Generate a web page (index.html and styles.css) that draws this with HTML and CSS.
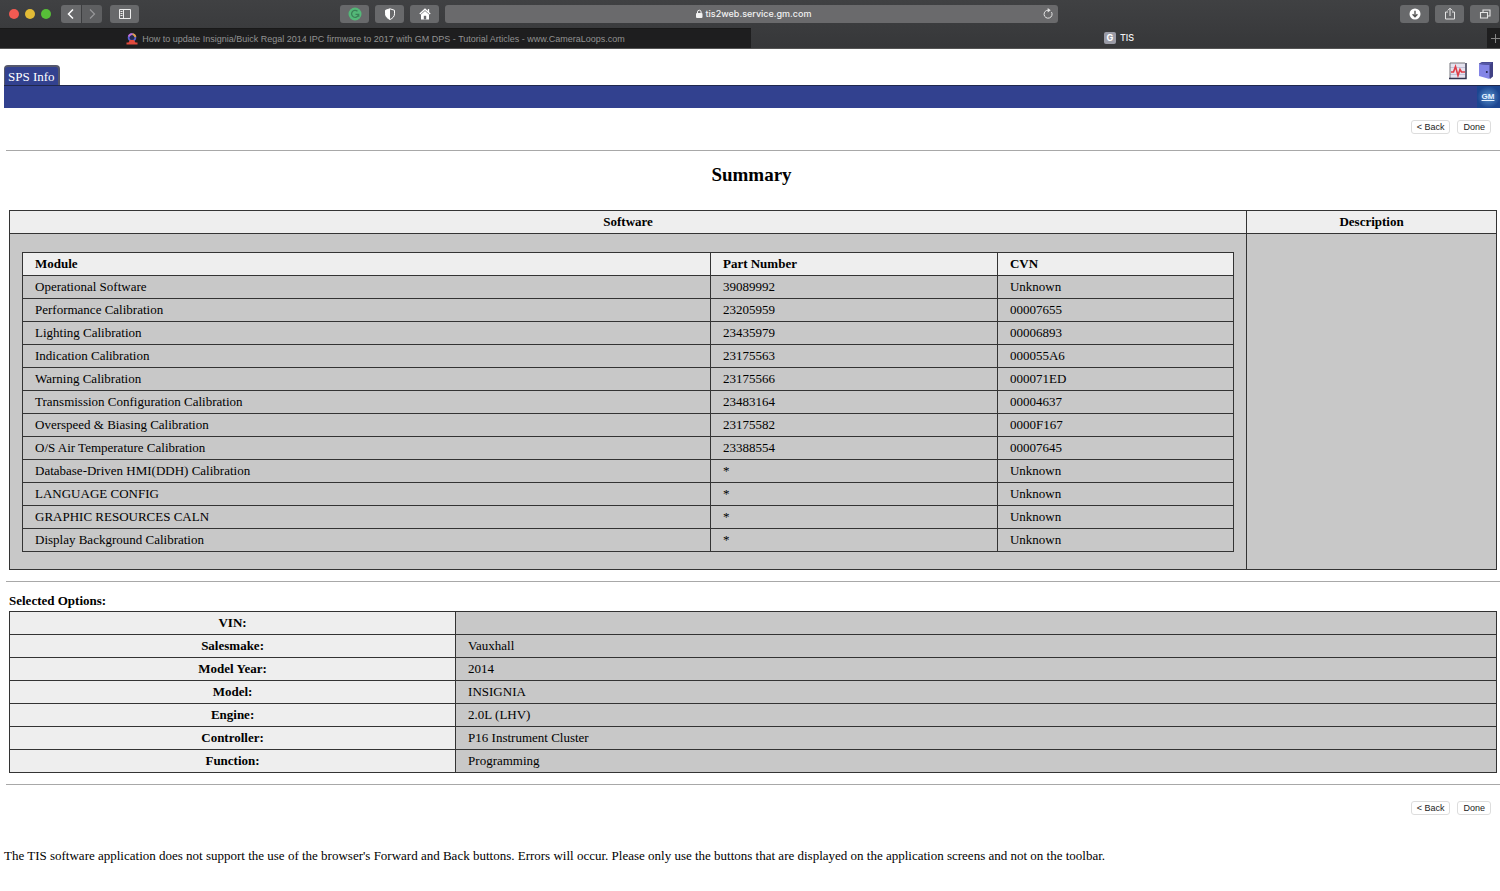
FILE: index.html
```html
<!DOCTYPE html>
<html lang="en">
<head>
<meta charset="utf-8">
<title>TIS</title>
<link rel="stylesheet" href="styles.css">
</head>
<body>
<header class="browser">
  <div class="toolbar">
    <div class="tools">
      <div class="lights"><span class="light red"></span><span class="light yellow"></span><span class="light green"></span></div>
      <div class="history">
        <button class="tool prev" aria-label="Back"><svg width="18" height="18" viewBox="0 0 18 18"><path d="M11 4.500L6.500 9l4.500 4.500" fill="none" stroke="#fff" stroke-width="1.500"/></svg></button>
        <button class="tool next" aria-label="Forward" disabled><svg width="18" height="18" viewBox="0 0 18 18"><path d="M7 4.500L11.500 9 7 13.500" fill="none" stroke="#98989a" stroke-width="1.200"/></svg></button>
      </div>
      <button class="tool" aria-label="Sidebar"><svg width="18" height="18" viewBox="0 0 18 18"><path d="M3.500 4.500h11v9h-11zM7.500 4.500v9M4.500 6.500h2M4.500 8.500h2M4.500 10.500h2" fill="none" stroke="#ececec"/></svg></button>
    </div>
    <div class="location">
      <button class="tool" aria-label="Grammarly"><svg width="18" height="18" viewBox="0 0 18 18"><circle cx="9" cy="9" r="6.500" fill="#54b878"/><path d="M11.500 6.300A3.500 3.500 0 1 0 12.400 10M9.500 9.300h3.200v2.400" fill="none" stroke="#3a8157" stroke-width="1.300"/></svg></button>
      <button class="tool" aria-label="Privacy report"><svg width="18" height="18" viewBox="0 0 18 18"><path d="M9 3.800l4.500 1.500v3.500c0 2.700-1.800 4.500-4.500 5.700-2.700-1.200-4.500-3-4.500-5.700V5.300z" fill="none" stroke="#fff"/><path d="M9 3.800v10.700c-2.700-1.200-4.500-3-4.500-5.700V5.300z" fill="#fff"/></svg></button>
      <button class="tool" aria-label="Home"><svg width="18" height="18" viewBox="0 0 18 18"><path d="M3.800 9L9 4.200 14.200 9M12.500 4v3.500" fill="none" stroke="#fff" stroke-width="1.300"/><path d="M5 9.500V14.500h8V9.500L9 6z" fill="#fff"/><path d="M7.800 14.500v-3.700h2.400v3.700" fill="#68696b"/></svg></button>
      <div class="address">
        <span class="host"><svg width="8" height="10" viewBox="0 0 8 10"><rect x="1" y="4" width="6.500" height="5" rx="1" fill="#f2f2f2"/><path d="M2.500 4.500V3a1.800 1.800 0 0 1 3.600 0v1.500" fill="none" stroke="#f2f2f2"/></svg>tis2web.service.gm.com</span>
        <button class="reload" aria-label="Reload"><svg width="14" height="14" viewBox="0 0 14 14"><path d="M10.500 5.100A4 4 0 1 1 7.500 3.200" fill="none" stroke="#e4e4e4"/><path d="M6.700 1l3 2.200-3 2.200z" fill="#e4e4e4"/></svg></button>
      </div>
    </div>
    <div class="actions">
      <button class="tool" aria-label="Downloads"><svg width="18" height="18" viewBox="0 0 18 18"><circle cx="9" cy="9" r="5.500" fill="#fff"/><path d="M9 5.800v5.500M6.600 9.200L9 11.700l2.400-2.500" fill="none" stroke="#555" stroke-width="1.400"/></svg></button>
      <button class="tool" aria-label="Share"><svg width="18" height="18" viewBox="0 0 18 18"><path d="M7 7H4.500v7h9V7H11M9 11V3.500M6.700 5.500L9 3.200l2.300 2.300" fill="none" stroke="#e4e4e4"/></svg></button>
      <button class="tool" aria-label="Tab overview"><svg width="18" height="18" viewBox="0 0 18 18"><path d="M4.500 7.500h7v5.500h-7zM7 7.500v-2.500h7v6h-2.500" fill="none" stroke="#e4e4e4" stroke-width="1.100"/></svg></button>
    </div>
  </div>
  <nav class="tabs">
    <a class="tab" href="#"><svg width="12" height="12" viewBox="0 0 12 12"><circle cx="6" cy="4.500" r="3.400" fill="#242a50" stroke="#5b62d8" stroke-width="1.800"/><path d="M2.800 3.500A3.400 3.400 0 0 1 6.500 1.100" fill="none" stroke="#c46bd0" stroke-width="1.800"/><path d="M6.500 1.100a3.400 3.400 0 0 1 2.900 3" fill="none" stroke="#e5a044" stroke-width="1.800"/><path d="M2.500 9.500L4 7h4l1.500 2.500zM.5 9.500h11v2H.5z" fill="#e24a3c"/></svg>How to update Insignia/Buick Regal 2014 IPC firmware to 2017 with GM DPS - Tutorial Articles - www.CameraLoops.com</a>
    <a class="tab active" href="#"><span class="favicon">G</span>TIS</a>
    <button class="newtab" aria-label="New tab"><svg width="13" height="14" viewBox="0 0 13 14"><path d="M4 7.500h9M8.500 3v9" stroke="#858585"/></svg></button>
  </nav>
</header>

<div class="top">
  <a class="module-tab" href="#">SPS Info</a>
  <div class="top-icons">
    <a href="#" aria-label="Diagnostics"><svg width="18" height="18" viewBox="0 0 18 18"><rect x="1" y="1" width="15" height="15" fill="#e5e2ee"/><path d="M1 5.500h15M1 12.500h15" stroke="#c4c2da"/><path d="M1 16V1h15" fill="none" stroke="#77777c"/><path d="M0 16.500h17V1" fill="none" stroke="#33334f" stroke-width="1.500"/><path d="M2 10h2.500l2-5.500 2.500 9 2-6 1.500 2.500H16" fill="none" stroke="#df3d47" stroke-width="1.600"/></svg></a>
    <a href="#" aria-label="Exit"><svg width="16" height="18" viewBox="0 0 16 18"><path d="M1 1.500L4 0h11v14.500l-3 2.500z" fill="#404185"/><path d="M1 2l10.500 1v14L1 14z" fill="#8385e6"/><path d="M1 2l3-1.500h10.500L11.500 3z" fill="#5558a5"/><circle cx="8.800" cy="10" r="1" fill="#22224a"/></svg></a>
  </div>
</div>
<div class="band"><span class="gm">GM</span></div>

<main>
  <div class="buttons"><button>&lt; Back</button><button>Done</button></div>
  <hr>
  <h2>Summary</h2>
  <table class="summary">
    <thead><tr><th class="software">Software</th><th>Description</th></tr></thead>
    <tbody><tr>
      <td class="holder">
        <table class="modules">
          <thead><tr><th class="name">Module</th><th class="part">Part Number</th><th>CVN</th></tr></thead>
          <tbody>
            <tr><td>Operational Software</td><td>39089992</td><td>Unknown</td></tr>
            <tr><td>Performance Calibration</td><td>23205959</td><td>00007655</td></tr>
            <tr><td>Lighting Calibration</td><td>23435979</td><td>00006893</td></tr>
            <tr><td>Indication Calibration</td><td>23175563</td><td>000055A6</td></tr>
            <tr><td>Warning Calibration</td><td>23175566</td><td>000071ED</td></tr>
            <tr><td>Transmission Configuration Calibration</td><td>23483164</td><td>00004637</td></tr>
            <tr><td>Overspeed &amp; Biasing Calibration</td><td>23175582</td><td>0000F167</td></tr>
            <tr><td>O/S Air Temperature Calibration</td><td>23388554</td><td>00007645</td></tr>
            <tr><td>Database-Driven HMI(DDH) Calibration</td><td>*</td><td>Unknown</td></tr>
            <tr><td>LANGUAGE CONFIG</td><td>*</td><td>Unknown</td></tr>
            <tr><td>GRAPHIC RESOURCES CALN</td><td>*</td><td>Unknown</td></tr>
            <tr><td>Display Background Calibration</td><td>*</td><td>Unknown</td></tr>
          </tbody>
        </table>
      </td>
      <td></td>
    </tr></tbody>
  </table>
  <hr>
  <table class="options">
    <caption>Selected Options:</caption>
    <tbody>
      <tr><th>VIN:</th><td></td></tr>
      <tr><th>Salesmake:</th><td>Vauxhall</td></tr>
      <tr><th>Model Year:</th><td>2014</td></tr>
      <tr><th>Model:</th><td>INSIGNIA</td></tr>
      <tr><th>Engine:</th><td>2.0L (LHV)</td></tr>
      <tr><th>Controller:</th><td>P16 Instrument Cluster</td></tr>
      <tr><th>Function:</th><td>Programming</td></tr>
    </tbody>
  </table>
  <hr>
  <div class="buttons"><button>&lt; Back</button><button>Done</button></div>
</main>
<p class="note">The TIS software application does not support the use of the browser's Forward and Back buttons. Errors will occur. Please only use the buttons that are displayed on the application screens and not on the toolbar.</p>
</body>
</html>
```
FILE: styles.css
```css
* {
  box-sizing: border-box;
}
body {
  margin: 0;
  background: #fff;
  color: #000;
  font-family: "Liberation Serif", "Times New Roman", serif;
  font-size: 13px;
  line-height: 16px;
}
a {
  color: inherit;
  text-decoration: none;
}
button {
  font-family: "Liberation Sans", Arial, sans-serif;
  border: 0;
  padding: 0;
}
svg {
  display: block;
  flex: none;
}

/* browser */
.browser {
  background: linear-gradient(#404143, #363739);
  border-bottom: 1px solid #555;
  font-family: Inter, sans-serif;
  font-size: 9px;
}
.toolbar {
  display: grid;
  grid-template-columns: 340fr 718fr 442fr;
  align-items: center;
  height: 28px;
}
.tools,
.location,
.actions,
.lights,
.history {
  display: flex;
  align-items: center;
}
.tools {
  gap: 8px;
  padding-left: 9px;
}
.lights {
  gap: 6px;
  margin-right: 2px;
}
.light {
  width: 10px;
  height: 10px;
  border-radius: 50%;
}
.red { background: #f25a52; }
.yellow { background: #e2bb36; }
.green { background: #57bf38; }
.history {
  gap: 1px;
}
.location {
  gap: 6px;
}
.actions {
  gap: 6px;
  justify-content: flex-end;
  padding-right: 1px;
}
.tool {
  display: flex;
  align-items: center;
  justify-content: center;
  flex: none;
  width: 29px;
  height: 18px;
  border-radius: 3px;
  background: #68696b;
}
.prev {
  width: 20px;
  border-radius: 3px 0 0 3px;
}
.next {
  width: 20px;
  border-radius: 0 3px 3px 0;
  background: #5e5f61;
}
.address {
  display: flex;
  align-items: center;
  flex: 1;
  height: 18px;
  padding: 0 3px 0 20px;
  border-radius: 3px;
  background: #6a6a6c;
  color: #f2f2f2;
  font-weight: 500;
}
.host {
  display: flex;
  align-items: center;
  justify-content: center;
  gap: 3px;
  flex: 1;
}
.reload {
  background: none;
}
.tabs {
  display: flex;
  height: 20px;
}
.tab {
  display: flex;
  align-items: center;
  justify-content: center;
  gap: 4px;
  flex: 751;
  background: #1e1e1f;
  color: #929292;
  border-top: 1px solid #191919;
  font-family: "Liberation Sans", Arial, sans-serif;
}
.active {
  flex: 736;
  background: none;
  color: #f2f2f2;
  border-top: 0;
  font-family: Inter, sans-serif;
  font-weight: 500;
}
.favicon {
  width: 12px;
  height: 12px;
  border-radius: 2px;
  background: #9a9ba6;
  color: #fff;
  line-height: 12px;
  text-align: center;
  font-weight: 700;
}
.newtab {
  width: 13px;
  background: #1e1e1f;
}

/* application header */
.top {
  display: flex;
  justify-content: space-between;
  align-items: flex-end;
  height: 36px;
  padding: 0 6px 0 4px;
}
.module-tab {
  height: 20px;
  padding: 2px 3px;
  border: 1px solid #55586c;
  border-width: 2px 2px 0 1px;
  border-radius: 4px 4px 0 0;
  background: #32418f;
  color: #fff;
}
.top-icons {
  display: flex;
  gap: 11px;
  padding-bottom: 5px;
}
.band {
  display: flex;
  justify-content: flex-end;
  height: 23px;
  margin-left: 4px;
  border-top: 1px solid #20284c;
  background: #32418f;
}
.gm {
  width: 23px;
  padding-right: 1px;
  background: radial-gradient(#5792cc, #1c4691 70%);
  color: #e6f2ff;
  font: 700 8px/21px "Liberation Sans", sans-serif;
  text-align: center;
  text-decoration: underline;
}

/* content */
main {
  padding: 12px 0 0 6px;
}
.buttons {
  display: flex;
  justify-content: flex-end;
  gap: 7px;
  padding-right: 9px;
}
.buttons button {
  height: 14px;
  padding: 0 5px;
  border: 1px solid #ddd;
  border-radius: 3px;
  background: #fff;
  color: #222;
  font-size: 9px;
  line-height: 12px;
}
hr {
  margin: 16px 0 12px;
  border: 0;
  border-top: 1px solid #a8a8a8;
}
h2 {
  margin: 0 3px 24px 0;
  font-size: 19px;
  line-height: 23px;
  text-align: center;
}
table {
  border-collapse: collapse;
  table-layout: fixed;
}
th,
td {
  height: 23px;
  padding: 3px 12px;
  border: 1px solid #333;
}
th {
  background: #eee;
}
td {
  background: #c8c8c8;
}
.summary,
.options {
  width: calc(100% - 6px);
  margin-left: 3px;
}
.software {
  width: 83.2%;
}
.summary .holder {
  padding: 18px 12px 17px;
}
.modules {
  width: 100%;
}
.modules th {
  text-align: left;
}
.name {
  width: 56.8%;
}
.part {
  width: 23.7%;
}
.summary + hr {
  margin: 11px 0;
}
.options caption {
  height: 18px;
  font-weight: 700;
  text-align: left;
}
.options th {
  width: 30%;
}
.options + hr {
  margin: 11px 0 16px;
}
.note {
  margin: 33px 4px 0;
}
```
